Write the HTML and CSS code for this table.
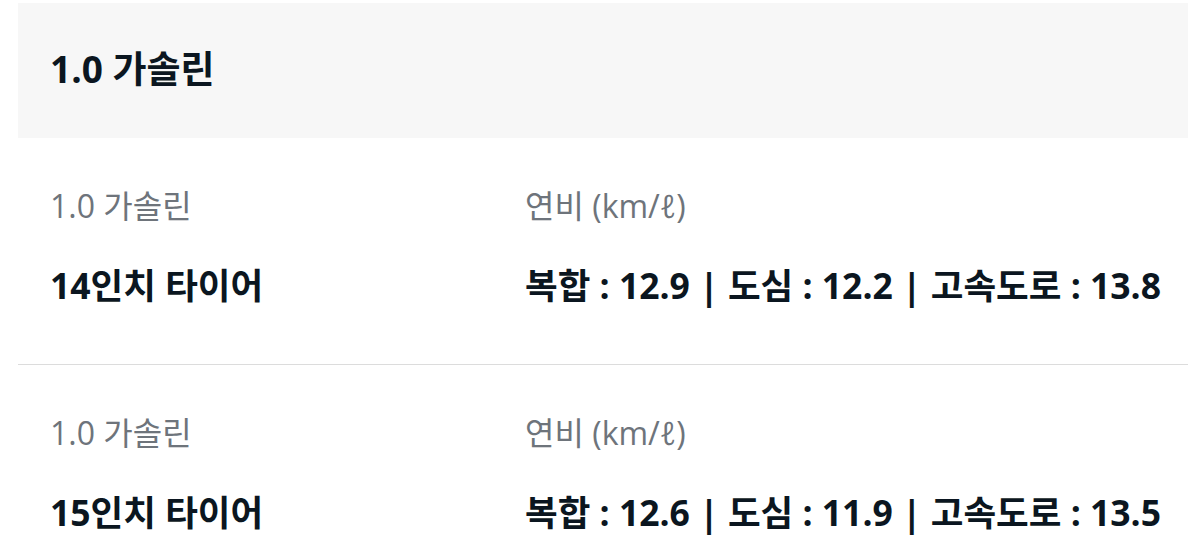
FILE: index.html
```html
<!DOCTYPE html>
<html lang="ko">
<head>
<meta charset="utf-8">
<link rel="stylesheet" href="styles.css">
</head>
<body>
<div class="wrap">
  <div class="head"><h2 class="title">1.0 가솔린</h2></div>
  <div class="row">
    <div class="col col-a">
      <div class="label">1.0 가솔린</div>
      <div class="value">14인치 타이어</div>
    </div>
    <div class="col col-b">
      <div class="label">연비 (km/ℓ)</div>
      <div class="value">복합 : 12.9 | 도심 : 12.2 | 고속도로 : 13.8</div>
    </div>
  </div>
  <div class="row">
    <div class="col col-a">
      <div class="label">1.0 가솔린</div>
      <div class="value">15인치 타이어</div>
    </div>
    <div class="col col-b">
      <div class="label">연비 (km/ℓ)</div>
      <div class="value">복합 : 12.6 | 도심 : 11.9 | 고속도로 : 13.5</div>
    </div>
  </div>
</div>
</body>
</html>
```

FILE: styles.css
```css
html, body { margin: 0; padding: 0; background: #fff; }
body { font-family: "Open Sans", "Noto Sans CJK KR", sans-serif; color: #0b1620; }
.wrap { padding: 3px 0 0 18px; }
.head { background: #f7f7f7; height: 135px; box-sizing: border-box; display: flex; align-items: center; padding: 0 0 4px 32px; }
.title { margin: 0; font-size: 37px; font-weight: 700; line-height: 44px; }
.row { display: flex; height: 227px; border-bottom: 1px solid #dcdcdc; padding-left: 32px; box-sizing: border-box; }
.row:last-child { border-bottom: none; }
.col { display: flex; flex-direction: column; padding-top: 48px; }
.col-a { width: 475px; }
.label { font-size: 32px; color: #6e747b; line-height: 40px; }
.value { font-size: 35.5px; font-weight: 700; line-height: 46px; margin-top: 36px; }
```
